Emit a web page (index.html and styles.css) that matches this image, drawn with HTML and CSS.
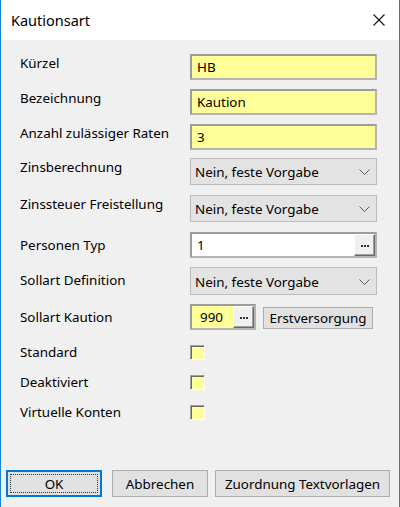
FILE: index.html
```html
<!DOCTYPE html>
<html lang="de">
<head>
<meta charset="utf-8">
<title>Kautionsart</title>
<link rel="stylesheet" href="styles.css">
</head>
<body>
<div class="window">
  <div class="titlebar">
    <span class="title">Kautionsart</span>
    <svg class="close" width="12" height="12" viewBox="0 0 12 12"><path d="M0.5 0.5 L11.5 11.5 M11.5 0.5 L0.5 11.5" stroke="#111" stroke-width="1.1" fill="none"/></svg>
  </div>
  <div class="client">
    <div class="form">
      <div class="row">
        <span class="lbl">Kürzel</span>
        <div class="edit yellow">HB</div>
      </div>
      <div class="row">
        <span class="lbl">Bezeichnung</span>
        <div class="edit yellow">Kaution</div>
      </div>
      <div class="row">
        <span class="lbl">Anzahl zulässiger Raten</span>
        <div class="edit yellow">3</div>
      </div>
      <div class="row sel r4">
        <span class="lbl">Zinsberechnung</span>
        <div class="combo"><span>Nein, feste Vorgabe</span><svg class="chev" width="11" height="6" viewBox="0 0 11 6"><polyline points="0.5,0.5 5.5,5.5 10.5,0.5" fill="none" stroke="#5a5a5a" stroke-width="1"/></svg></div>
      </div>
      <div class="row sel r5">
        <span class="lbl">Zinssteuer Freistellung</span>
        <div class="combo"><span>Nein, feste Vorgabe</span><svg class="chev" width="11" height="6" viewBox="0 0 11 6"><polyline points="0.5,0.5 5.5,5.5 10.5,0.5" fill="none" stroke="#5a5a5a" stroke-width="1"/></svg></div>
      </div>
      <div class="row r6 low">
        <span class="lbl">Personen Typ</span>
        <div class="edit picker"><span class="ptext">1</span><span class="dots"><svg width="8" height="2" viewBox="0 0 8 2"><rect x="0" y="0" width="2" height="2" fill="#333"/><rect x="3" y="0" width="2" height="2" fill="#333"/><rect x="6" y="0" width="2" height="2" fill="#333"/></svg></span></div>
      </div>
      <div class="row sel tall low">
        <span class="lbl">Sollart Definition</span>
        <div class="combo"><span>Nein, feste Vorgabe</span><svg class="chev" width="11" height="6" viewBox="0 0 11 6"><polyline points="0.5,0.5 5.5,5.5 10.5,0.5" fill="none" stroke="#5a5a5a" stroke-width="1"/></svg></div>
      </div>
      <div class="row low">
        <span class="lbl">Sollart Kaution</span>
        <div class="kaution">
          <div class="edit picker small"><span class="ptext yellow num">990</span><span class="dots"><svg width="8" height="2" viewBox="0 0 8 2"><rect x="0" y="0" width="2" height="2" fill="#333"/><rect x="3" y="0" width="2" height="2" fill="#333"/><rect x="6" y="0" width="2" height="2" fill="#333"/></svg></span></div>
          <div class="btn first">Erstversorgung</div>
        </div>
      </div>
      <div class="row check c1">
        <span class="lbl">Standard</span>
        <span class="cb"></span>
      </div>
      <div class="row check">
        <span class="lbl">Deaktiviert</span>
        <span class="cb"></span>
      </div>
      <div class="row check">
        <span class="lbl">Virtuelle Konten</span>
        <span class="cb"></span>
      </div>
    </div>
    <div class="footer">
      <div class="btn ok"><span class="focus">OK</span></div>
      <div class="btn cancel">Abbrechen</div>
      <div class="btn assign">Zuordnung Textvorlagen</div>
    </div>
  </div>
</div>
</body>
</html>
```

FILE: styles.css
```css
* { box-sizing: border-box; }

html, body {
  margin: 0;
  padding: 0;
  background: #f0f0f0;
}

body {
  font-family: "Noto Sans", "Open Sans", sans-serif;
  font-size: 13.4px;
  color: #000;
}

.window {
  width: 400px;
  height: 507px;
  border-left: 1px solid #1883d7;
  border-right: 1px solid #1883d7;
  display: flex;
  flex-direction: column;
  overflow: hidden;
}

.titlebar {
  height: 40px;
  background: #fff;
  display: flex;
  align-items: center;
  padding-left: 10px;
  padding-right: 14px;
  flex: none;
}

.title {
  font-size: 14.5px;
  line-height: 18px;
}

.close {
  margin-left: auto;
  display: block;
}

.client {
  flex: 1;
  background: #f0f0f0;
  display: flex;
  flex-direction: column;
}

.form {
  padding-top: 14px;
  padding-left: 19px;
  display: flex;
  flex-direction: column;
}

.row {
  display: flex;
  align-items: flex-start;
  height: 26px;
  margin-top: 9px;
}

.row:first-child { margin-top: 0; }

.row.sel { height: 27px; }
.row.tall { height: 28px; }
.row.r4 { margin-top: 8px; }
.row.r5 { margin-top: 10px; }
.row.r6 { margin-top: 10px; }

.lbl {
  width: 170px;
  flex: none;
  line-height: 18px;
  white-space: nowrap;
}

.row.low .lbl { padding-top: 4px; }

.edit {
  width: 187px;
  height: 26px;
  border: 2px solid;
  border-color: #9c9c9c #b4b4b4 #b4b4b4 #9c9c9c;
  background: #fff;
  line-height: 22px;
  padding-left: 5px;
  white-space: nowrap;
}

.yellow { background: #ffff99; }

.combo {
  width: 187px;
  height: 100%;
  border: 1px solid #bcbcbc;
  background: #e3e3e3;
  display: flex;
  align-items: center;
  justify-content: space-between;
  padding: 1px 6px 0 4px;
  white-space: nowrap;
}

.chev { display: block; flex: none; }

.picker {
  display: flex;
  padding-left: 0;
}

.ptext {
  flex: 1;
  padding-left: 5px;
}

.dots {
  width: 21px;
  flex: none;
  height: 22px;
  background: #f0f0f0;
  border: 1px solid;
  border-color: #fff #696969 #696969 #fff;
  box-shadow: inset -1px -1px #a0a0a0;
  display: flex;
  align-items: center;
  justify-content: center;
  padding-top: 2px;
}

.dots svg { display: block; }

.kaution {
  display: flex;
  align-items: flex-start;
}

.picker.small { width: 66px; }

.num { padding-left: 8px; }

.btn {
  background: #e1e1e1;
  border: 1px solid #adadad;
  display: flex;
  align-items: center;
  justify-content: center;
  white-space: nowrap;
}

.btn.first {
  margin-left: 7px;
  margin-top: 3px;
  width: 110px;
  height: 22px;
}

.row.check {
  height: 15px;
  align-items: center;
  margin-top: 15px;
}

.row.check .lbl { margin-top: -2px; }

.cb {
  width: 15px;
  height: 15px;
  background: #ffff99;
  border: 1px solid;
  border-color: #a0a0a0 #fff #fff #a0a0a0;
  box-shadow: inset 1px 1px #696969;
}

.footer {
  margin-top: auto;
  display: flex;
  padding: 0 0 10px 5px;
}

.footer .btn { height: 27px; }

.btn.ok {
  width: 96px;
  border-color: #0078d7;
  box-shadow: inset 0 0 0 1px #0078d7;
  padding: 3px;
}

.focus {
  flex: 1;
  align-self: stretch;
  border: 1px dotted #333;
  display: flex;
  align-items: center;
  justify-content: center;
}

.btn.cancel {
  width: 96px;
  margin-left: 10px;
}

.btn.assign {
  width: 175px;
  margin-left: 7px;
}
```
